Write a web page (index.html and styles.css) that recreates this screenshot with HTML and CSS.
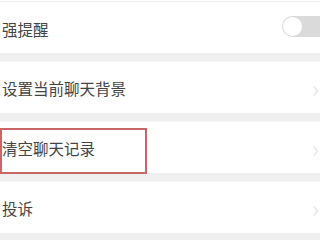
FILE: index.html
```html
<!DOCTYPE html>
<html lang="zh-CN">
<head>
  <meta charset="UTF-8">
  <meta name="viewport" content="width=device-width, initial-scale=1.0">
  <title>聊天设置</title>
  <link rel="stylesheet" href="styles.css">
</head>
<body>
  <div class="settings">
    <div class="top-line"></div>

    <div class="row">
      <span class="label">强提醒</span>
      <span class="switch"><span class="knob"></span></span>
    </div>
    <div class="gap"></div>

    <div class="row">
      <span class="label">设置当前聊天背景</span>
      <span class="chevron">›</span>
    </div>
    <div class="gap"></div>

    <div class="row marked">
      <span class="label">清空聊天记录</span>
      <span class="chevron">›</span>
      <!-- annotation box drawn over the row -->
      <div class="highlight"></div>
    </div>
    <div class="gap"></div>

    <div class="row">
      <span class="label">投诉</span>
      <span class="chevron">›</span>
    </div>
    <div class="gap"></div>
  </div>
</body>
</html>
```

FILE: styles.css
```css
body {
  margin: 0;
  background-color: #fff;
  font-family: "Noto Sans CJK SC", "Noto Sans", sans-serif;
  overflow: hidden;
}

.settings {
  display: flex;
  flex-direction: column;
  width: 320px;
}

.top-line {
  height: 1px;
  margin-top: 1px;
  margin-bottom: 1px;
  background-color: #f2f2f2;
}

.row {
  display: flex;
  align-items: center;
  justify-content: space-between;
  height: 50px;
  padding-left: 2px;
  background-color: #fff;
  position: relative;
}

.gap + .row {
  height: 51px;
}

.label {
  font-size: 15.5px;
  color: #444;
  margin-top: 1px;
}

.gap {
  height: 9px;
  background-color: #efefef;
  border-bottom: 1px solid #f7f7f7;
  box-sizing: border-box;
}

.switch {
  display: flex;
  align-items: center;
  width: 46px;
  height: 21px;
  margin-right: -8px;
  margin-top: -4px;
  border-radius: 11px;
  background-color: #dadada;
}

.knob {
  width: 19px;
  height: 19px;
  margin-left: 1px;
  border-radius: 50%;
  background-color: #fff;
}

.chevron {
  font-size: 24px;
  line-height: 1;
  color: #e8e8e8;
  margin-right: 1px;
}

.highlight {
  position: absolute;
  left: 0;
  top: 6px;
  width: 143px;
  height: 42px;
  border: 2px solid #c96767;
}
```
